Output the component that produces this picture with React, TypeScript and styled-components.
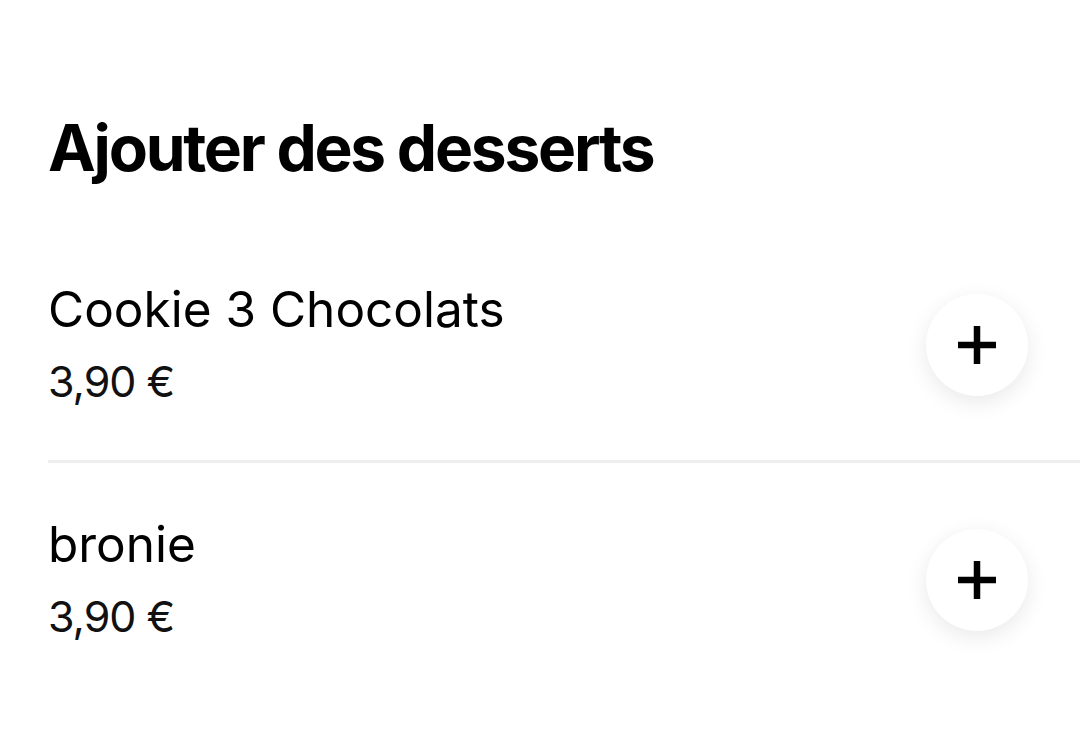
import React from "react";
import styled, {createGlobalStyle} from "styled-components";

const GlobalStyle = createGlobalStyle`
  html, body {
    margin: 0;
    padding: 0;
    background: #ffffff;
  }
  body {
    font-family: Inter, "Liberation Sans", sans-serif;
    color: #000000;
  }
`

const Page = styled.div`
  width: 1080px;
  height: 740px;
  overflow: hidden;
  padding: 108px 0 0 48px;
  box-sizing: border-box;
`

const Title = styled.h1`
  margin: 0 0 40px;
  font-size: 64px;
  line-height: 80px;
  font-weight: 700;
  letter-spacing: -2.25px;
`

const List = styled.ul`
  list-style: none;
  margin: 0;
  padding: 0;
`

const Row = styled.li`
  display: flex;
  align-items: center;
  justify-content: space-between;
  padding: 52px 52px 50px 0;
  border-bottom: 3px solid #eeeeee;

  &:last-child {
    border-bottom: none;
  }
`

const Info = styled.div`
  display: flex;
  flex-direction: column;
  gap: 14px;
`

const Name = styled.span`
  font-size: 49.5px;
  line-height: 58px;
  font-weight: 400;
`

const Price = styled.span`
  font-size: 43px;
  line-height: 58px;
  font-weight: 400;
  letter-spacing: -1px;
  color: #111111;
`

const AddButton = styled.button`
  width: 102px;
  height: 102px;
  border-radius: 50%;
  border: none;
  background: #ffffff;
  box-shadow: 0 6px 22px rgba(0, 0, 0, 0.09);
  display: flex;
  align-items: center;
  justify-content: center;
  padding: 0;
  cursor: pointer;
`

const items = [
  {name: "Cookie 3 Chocolats", price: "3,90 €"},
  {name: "bronie", price: "3,90 €"},
]

const PlusIcon = () => (
  <svg width="40" height="40" viewBox="0 0 40 40">
    <path d="M20 1v38M1 20h38" stroke="#000" strokeWidth="6.5" fill="none"/>
  </svg>
)

export default function App() {
  return <>
    <GlobalStyle/>
    <Page>
      <Title>Ajouter des desserts</Title>
      <List>
        {items.map(item =>
          <Row key={item.name}>
            <Info>
              <Name>{item.name}</Name>
              <Price>{item.price}</Price>
            </Info>
            <AddButton aria-label="Ajouter"><PlusIcon/></AddButton>
          </Row>
        )}
      </List>
    </Page>
  </>
}
